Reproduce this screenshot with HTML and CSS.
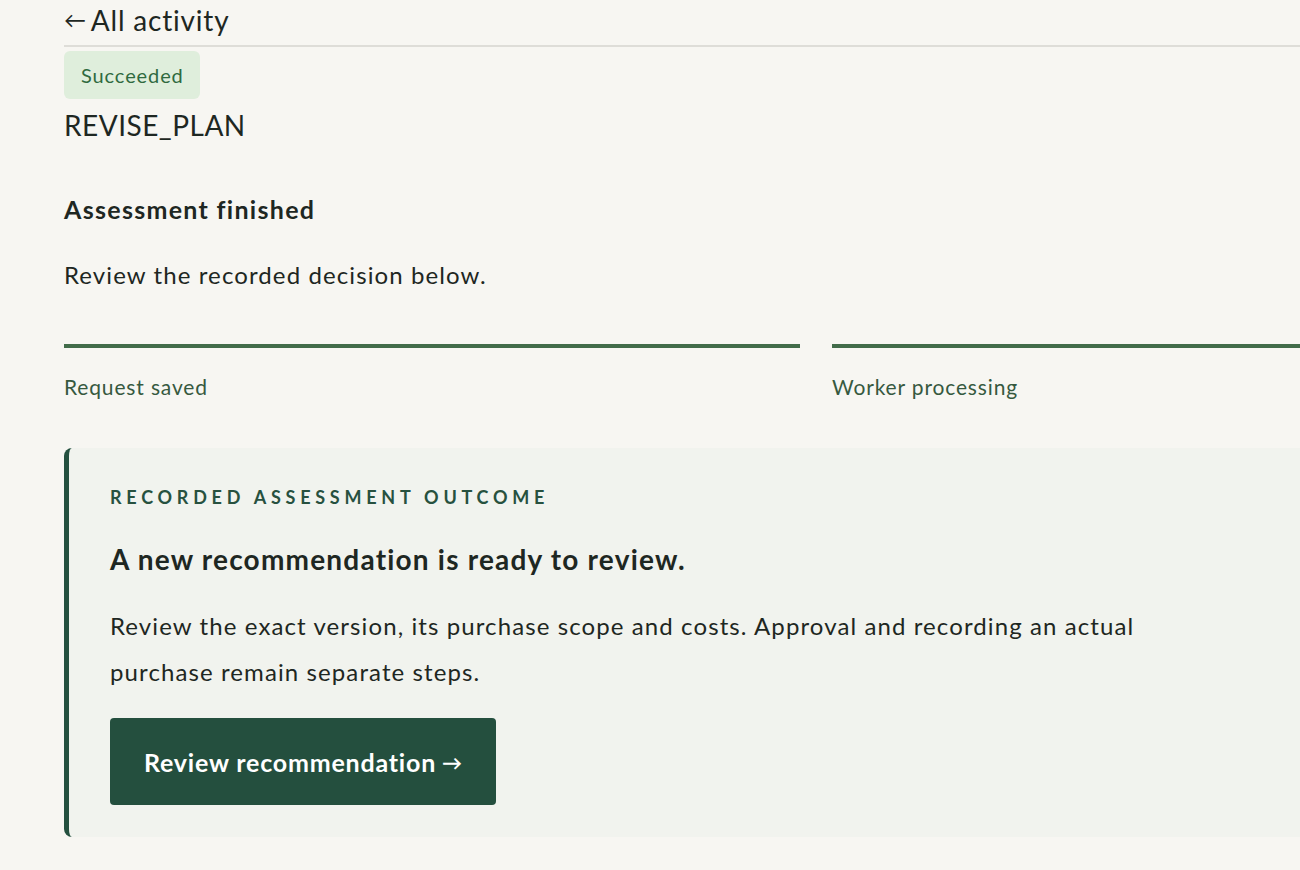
FILE: index.html
```html
<!DOCTYPE html>
<html lang="en">
<head>
    <meta charset="UTF-8">
    <title>Activity detail</title>
    <link rel="stylesheet" href="styles.css">
</head>
<body>
    <div class="page">
        <!-- back link -->
        <div class="topbar">
            <a class="back-link" href="#"><span class="arrow">&larr;</span>All activity</a>
        </div>

        <div class="job-head">
            <span class="badge">Succeeded</span>
            <div class="job-name">REVISE_PLAN</div>
        </div>

        <h2 class="status-title">Assessment finished</h2>
        <p class="status-text">Review the recorded decision below.</p>

        <!-- progress steps -->
        <div class="steps">
            <div class="step done">
                <div class="step-bar"></div>
                <div class="step-label">Request saved</div>
            </div>
            <div class="step done">
                <div class="step-bar"></div>
                <div class="step-label">Worker processing</div>
            </div>
        </div>

        <!-- outcome card -->
        <div class="outcome">
            <div class="outcome-kicker">Recorded assessment outcome</div>
            <h3 class="outcome-title">A new recommendation is ready to review.</h3>
            <p class="outcome-text">Review the exact version, its purchase scope and costs. Approval and recording an actual purchase remain separate steps.</p>
            <a class="btn-primary" href="#">Review recommendation <span class="btn-arrow">&rarr;</span></a>
        </div>
    </div>
</body>
</html>
```

FILE: styles.css
```css
* {
    margin: 0;
    padding: 0;
    box-sizing: border-box;
}

body {
    font-family: Lato, "Open Sans", Arial, sans-serif;
    background-color: #F7F6F2;
    color: #1E2722;
    overflow: hidden;
}

.page {
    width: 1504px;
    margin-left: 64px;
}

/* top bar */
.topbar {
    height: 47px;
    border-bottom: 2px solid #DEDDD8;
    margin-right: -300px;
}

.back-link {
    display: inline-flex;
    align-items: center;
    font-size: 28px;
    line-height: 40px;
    letter-spacing: 0.8px;
    color: #1E2722;
    text-decoration: none;
}

.back-link .arrow {
    font-size: 22px;
    margin-right: 4px;
}

.job-head {
    padding-top: 4px;
}

.badge {
    display: inline-block;
    background-color: #DFEEDC;
    color: #2F6A3F;
    font-size: 20px;
    letter-spacing: 0.9px;
    line-height: 48px;
    padding: 0 16px 0 17px;
    border-radius: 6px;
}

.job-name {
    font-size: 28px;
    line-height: 40px;
    letter-spacing: 0.5px;
    margin-top: 6px;
}

.status-title {
    font-size: 25px;
    font-weight: 700;
    line-height: 34px;
    letter-spacing: 1.3px;
    margin-top: 47px;
}

.status-text {
    font-size: 24px;
    line-height: 34px;
    letter-spacing: 1.1px;
    margin-top: 32px;
}

/* steps */
.steps {
    display: grid;
    grid-template-columns: 1fr 1fr;
    gap: 32px;
    margin-top: 52px;
}

.step-bar {
    height: 4px;
    background-color: #426C4A;
}

.step-label {
    font-size: 21px;
    line-height: 30px;
    letter-spacing: 0.85px;
    color: #36593F;
    margin-top: 24px;
}

/* outcome card */
.outcome {
    margin-top: 46px;
    background-color: #F1F3EE;
    border-left: 5px solid #24503F;
    border-radius: 8px 0 0 8px;
    padding: 38px 41px 32px;
}

.outcome-kicker {
    font-size: 18px;
    font-weight: 700;
    letter-spacing: 4.75px;
    text-transform: uppercase;
    color: #27513F;
    line-height: 22px;
}

.outcome-title {
    font-size: 28px;
    font-weight: 700;
    line-height: 36px;
    letter-spacing: 1.2px;
    margin-top: 33px;
}

.outcome-text {
    font-size: 24px;
    line-height: 46px;
    letter-spacing: 1.1px;
    margin-top: 26px;
    max-width: 1080px;
}

.btn-primary {
    display: inline-flex;
    align-items: center;
    height: 87px;
    padding: 0 33px 0 34px;
    margin-top: 23px;
    background-color: #244F3E;
    color: #FFFFFF;
    font-size: 25px;
    font-weight: 700;
    letter-spacing: 0.8px;
    text-decoration: none;
    border-radius: 4px;
}

.btn-arrow {
    font-size: 20px;
    margin-left: 6px;
}
```
